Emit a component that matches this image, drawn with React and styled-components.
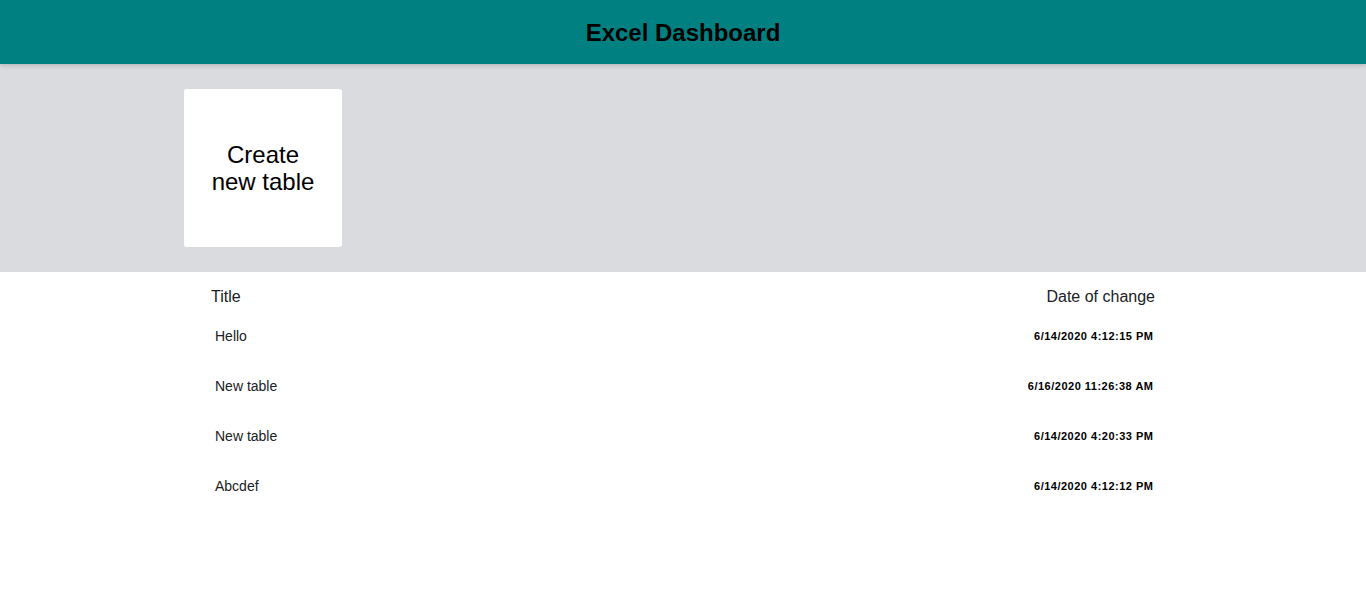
import React from 'react';
import styled, { createGlobalStyle } from 'styled-components';

const GlobalStyle = createGlobalStyle`
  body {
    margin: 0;
    font-family: "Liberation Sans", Arial, sans-serif;
    background: #fff;
  }
`;

const Header = styled.header`
  position: relative;
  z-index: 1;
  height: 64px;
  padding-top: 2px;
  box-sizing: border-box;
  background: #008080;
  display: flex;
  align-items: center;
  justify-content: center;
  box-shadow: 0 2px 4px rgba(0, 0, 0, 0.15);

  h1 {
    margin: 0;
    font-size: 24px;
    font-weight: 700;
    color: #000;
  }
`;

const Templates = styled.section`
  background: #dadbdf;
  padding: 25px 0;
`;

const Container = styled.div`
  width: 998px;
  margin: 0 auto;
`;

const CreateCard = styled.div`
  width: 158px;
  height: 158px;
  background: #fff;
  border-radius: 3px;
  display: flex;
  align-items: center;
  justify-content: center;
  text-align: center;
  font-size: 24px;
  line-height: 27px;
  color: #000;
  cursor: pointer;
`;

const ListHeader = styled.div`
  display: flex;
  justify-content: space-between;
  padding: 15px 27px 4px;
  font-size: 16px;
  line-height: 20px;
  color: #202124;
`;

const Row = styled.div`
  display: flex;
  justify-content: space-between;
  align-items: center;
  height: 50px;
  padding: 0 29px 0 31px;
`;

const RowTitle = styled.span`
  font-size: 14px;
  color: #202124;
`;

const RowDate = styled.strong`
  font-size: 11px;
  font-weight: 700;
  letter-spacing: 0.5px;
  margin-right: -0.5px;
  color: #000;
`;

const records = [
  { id: 1, title: 'Hello', date: '6/14/2020 4:12:15 PM' },
  { id: 2, title: 'New table', date: '6/16/2020 11:26:38 AM' },
  { id: 3, title: 'New table', date: '6/14/2020 4:20:33 PM' },
  { id: 4, title: 'Abcdef', date: '6/14/2020 4:12:12 PM' },
];

export default function App() {
  return (
    <>
      <GlobalStyle />
      <Header>
        <h1>Excel Dashboard</h1>
      </Header>
      <Templates>
        <Container>
          <CreateCard>
            Create
            <br />
            new table
          </CreateCard>
        </Container>
      </Templates>
      <Container>
        <ListHeader>
          <span>Title</span>
          <span>Date of change</span>
        </ListHeader>
        {records.map(r => (
          <Row key={r.id}>
            <RowTitle>{r.title}</RowTitle>
            <RowDate>{r.date}</RowDate>
          </Row>
        ))}
      </Container>
    </>
  );
}
